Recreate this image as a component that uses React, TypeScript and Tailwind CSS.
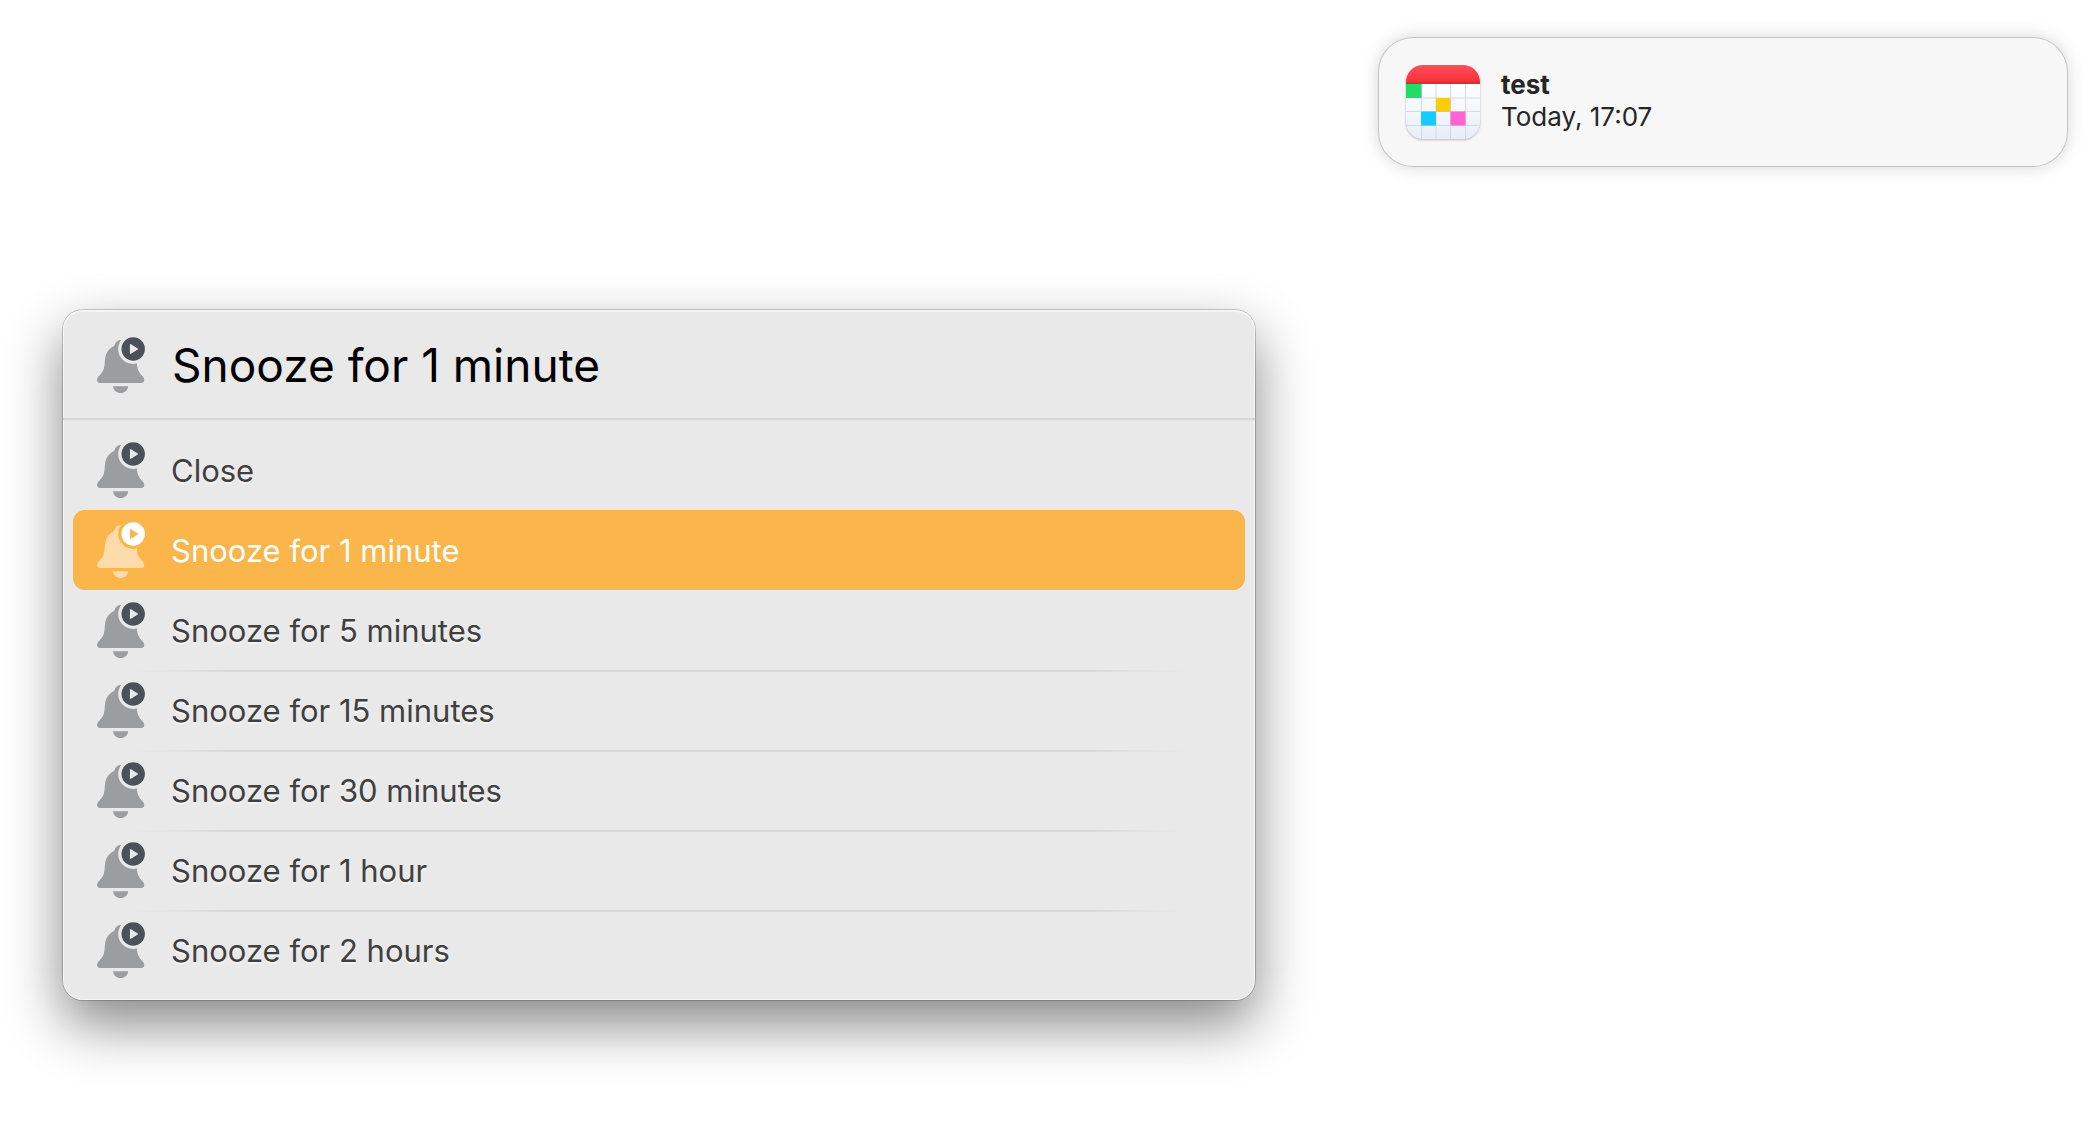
import { useState } from "react";

const actions = [
  "Close",
  "Snooze for 1 minute",
  "Snooze for 5 minutes",
  "Snooze for 15 minutes",
  "Snooze for 30 minutes",
  "Snooze for 1 hour",
  "Snooze for 2 hours",
];

function BellIcon({ selected = false }: { selected?: boolean }) {
  return (
    <svg
      viewBox="0 0 48 56"
      aria-hidden="true"
      className={`h-14 w-12 shrink-0 ${selected ? "text-[#fddbaa]" : "text-[#9a9ea1]"}`}
    >
      <mask id={selected ? "bell-cut-on" : "bell-cut"}>
        <rect width="48" height="56" fill="white" />
        <circle cx="36.2" cy="12" r="15" fill="black" />
      </mask>
      <path
        mask={selected ? "url(#bell-cut-on)" : "url(#bell-cut)"}
        fill="currentColor"
        d="M23.6 3C20.8 3 18 5.400 17.400 8.800C12.600 11 9 15.500 8.200 21C7.600 25 7.800 29 6.600 32.500C5.300 36 2.800 38 1.200 39.800C0.300 40.900 0 42.300 0.100 43.600C0.300 45.300 1.300 46 3 46H44.400C46.100 46 47 45.300 47.200 43.600C47.300 42.300 47 40.900 46.100 39.800C44.500 38 42 36 40.900 32.500C39.700 29 40.100 25 39.400 21C38.600 15.500 34.600 11 29.800 8.800C29.200 5.400 26.400 3 23.600 3Z"
      />
      <path fill="currentColor" d="M16 49.200H31.200C30.800 53.400 27.600 56 23.600 56S16.400 53.400 16 49.200Z" />
      <circle cx="36.2" cy="12" r="11.700" className={selected ? "fill-white" : "fill-[#4a515a]"} />
      <path
        d="M33.600 7.800L40.400 12L33.600 16.200Z"
        strokeWidth="1.400"
        strokeLinejoin="round"
        className={selected ? "fill-[#fab54b] stroke-[#fab54b]" : "fill-[#e9e9e9] stroke-[#e9e9e9]"}
      />
    </svg>
  );
}

function CalendarIcon() {
  return (
    <svg viewBox="0 0 74 74" aria-hidden="true" className="size-[74px] shrink-0 drop-shadow-[0_1px_1px_rgba(0,0,0,0.25)]">
      <defs>
        <clipPath id="cal-clip">
          <rect width="74" height="74" rx="17" />
        </clipPath>
        <linearGradient id="cal-red" x1="0" y1="0" x2="0" y2="1">
          <stop offset="0" stopColor="#ff4f5e" />
          <stop offset="0.85" stopColor="#f53238" />
          <stop offset="1" stopColor="#d9262c" />
        </linearGradient>
        <linearGradient id="cal-paper" x1="0" y1="0" x2="0" y2="1">
          <stop offset="0.3" stopColor="#ffffff" />
          <stop offset="1" stopColor="#e8edf6" />
        </linearGradient>
      </defs>
      <g clipPath="url(#cal-clip)">
        <rect width="74" height="74" fill="url(#cal-paper)" />
        <path
          d="M15.500 19V74M30 19V74M44.500 19V74M59.500 19V74M0 33H74M0 46.500H74M0 60.500H74"
          stroke="#cfdbe8"
          strokeWidth="1"
        />
        <rect width="74" height="19" fill="url(#cal-red)" />
        <rect x="0" y="19" width="15.500" height="14" fill="#21dd66" />
        <rect x="30" y="33" width="14.500" height="14" fill="#fdcb0d" />
        <rect x="15" y="46.500" width="15" height="14" fill="#16cbff" />
        <rect x="44.500" y="46.500" width="15" height="14" fill="#ff64d2" />
      </g>
    </svg>
  );
}

export default function App() {
  const [selected, setSelected] = useState(1);

  return (
    <main className="grid min-h-screen grid-cols-[1192fr_688fr] items-start gap-x-[124px] bg-white pt-[38px] pr-8 pb-20 pl-[63px] font-['Inter',sans-serif]">
      <section
        aria-label="Reminder actions"
        className="mt-68 overflow-hidden rounded-[20px] bg-[#e9e9e9] shadow-[0_0_0_1px_rgba(0,0,0,0.2),0_24px_56px_rgba(0,0,0,0.48),inset_0_0_0_1px_rgba(255,255,255,0.6),inset_0_2px_0_rgba(255,255,255,0.4)]"
      >
        <div className="flex h-[110px] items-center gap-[27px] border-b-2 border-[#d8d8d8] px-[34px] pt-0.5">
          <BellIcon />
          <input
            type="text"
            aria-label="Action"
            value={actions[selected]}
            readOnly
            className="min-w-0 flex-1 bg-transparent text-[46px] font-normal text-black outline-none"
          />
        </div>
        <ul className="p-[10px]">
          {actions.map((action, i) => (
            <li key={action}>
              {i > 2 && (
                <div className="mx-[60px] -mb-0.5 h-0.5 bg-[linear-gradient(to_right,transparent,#d8d8d8_10%,#d8d8d8_90%,transparent)]" />
              )}
              <button
                type="button"
                onClick={() => setSelected(i)}
                className={`flex h-20 w-full items-center gap-[26px] rounded-[12px] px-6 text-left text-[31px] ${
                  i === selected ? "bg-[#fab54b] text-white" : "text-[#404040] text-shadow-[0_2px_0_rgba(255,255,255,0.5)]"
                }`}
              >
                <BellIcon selected={i === selected} />
                <span className="pt-0.5">{action}</span>
              </button>
            </li>
          ))}
        </ul>
      </section>

      <aside
        aria-label="Notification"
        className="flex items-center gap-[21px] rounded-[34px] bg-[#f7f7f7] px-[27px] py-[27px] shadow-[0_0_0_1px_rgba(0,0,0,0.16),0_0_18px_rgba(0,0,0,0.18)]"
      >
        <CalendarIcon />
        <div className="pb-0.5 text-[26px] leading-8 text-[#262626]">
          <h2 className="font-bold">test</h2>
          <p>Today, 17:07</p>
        </div>
      </aside>
    </main>
  );
}
